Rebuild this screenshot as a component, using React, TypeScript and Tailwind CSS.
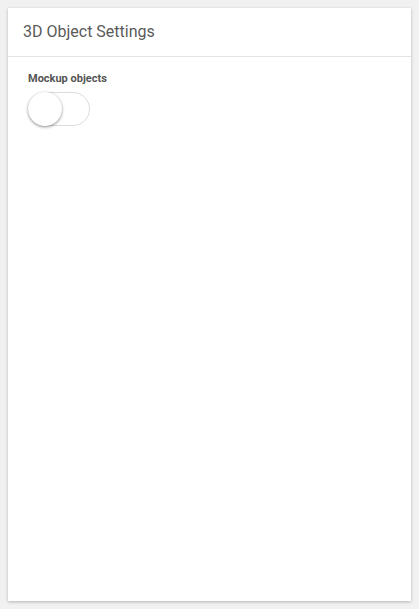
export default function App() {
  return (
    <div className="min-h-[609px] bg-[#f1f1f1] p-2 font-['Roboto',sans-serif]">
      <div className="flex h-[593px] flex-col bg-white shadow-[0_1px_3px_rgba(0,0,0,0.25)]">
        <div className="flex h-[49px] items-center border-b border-[#e3e3e3] px-[15px]">
          <h2 className="text-[16px] font-normal text-[#5a5a5a]">3D Object Settings</h2>
        </div>
        <div className="px-5 pt-[15px]">
          <label className="block text-[11px] font-bold leading-[14px] text-[#555]">Mockup objects</label>
          <button className="relative mt-[6px] block h-[34px] w-[62px] rounded-full border border-[#dcdcdc] bg-white">
            <span className="absolute left-[-1px] top-[-1px] h-[34px] w-[34px] rounded-full bg-white shadow-[0_1px_3px_rgba(0,0,0,0.45)]" />
          </button>
        </div>
      </div>
    </div>
  )
}
